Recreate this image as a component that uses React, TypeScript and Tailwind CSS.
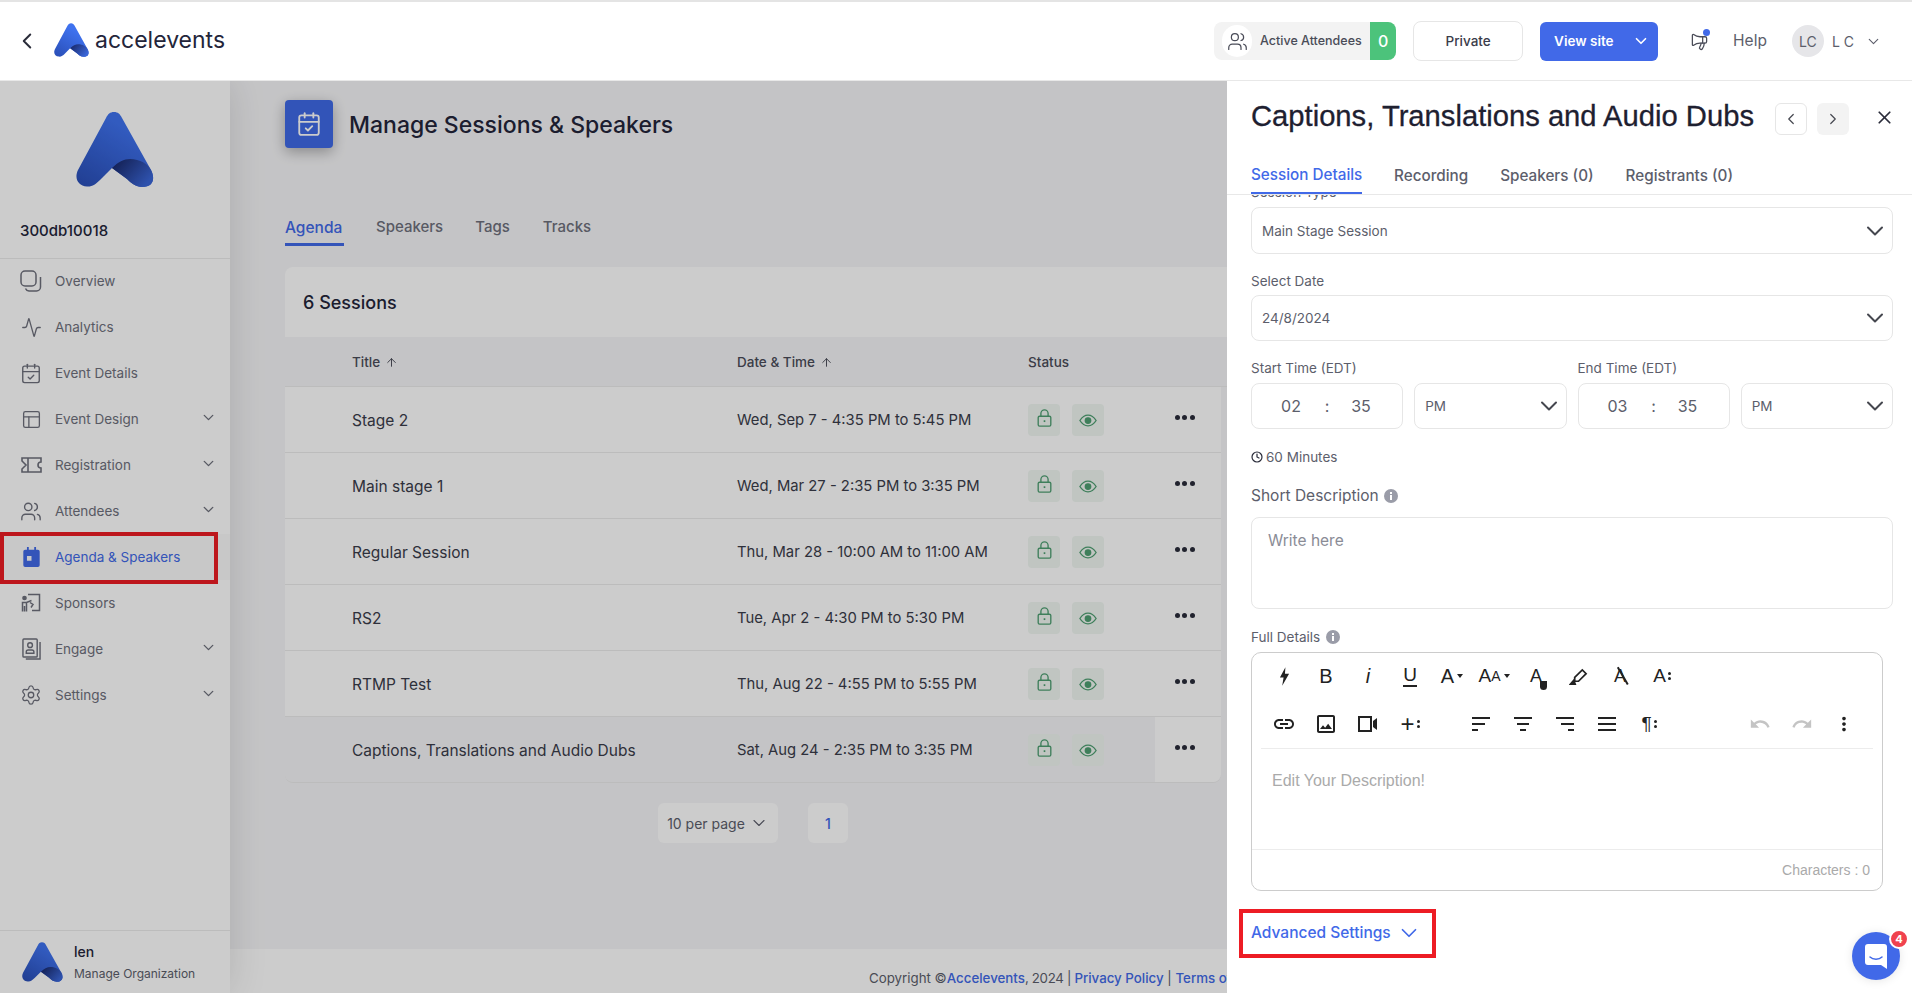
import React from 'react';
import { Activity, ArrowUp, CalendarCheck, ChevronDown, ChevronLeft, ChevronRight, Clock, Megaphone, PanelsTopLeft, Settings, Users, X } from 'lucide-react';
import { MdLink, MdMoreVert, MdOutlineImage, MdRedo, MdUndo } from 'react-icons/md';

const Logo = ({ id, className }: { id: string; className: string }) => (
  <svg viewBox="0 0 78 75" className={className}>
    <defs>
      <linearGradient id={`${id}a`} x1="0.1" y1="1" x2="0.6" y2="0.2">
        <stop offset="0" stopColor="#2a4fb8" />
        <stop offset="1" stopColor="#3f72ef" />
      </linearGradient>
      <linearGradient id={`${id}b`} x1="0" y1="0" x2="1" y2="0.6">
        <stop offset="0" stopColor="#16235f" />
        <stop offset="1" stopColor="#3a66d8" />
      </linearGradient>
    </defs>
    <path d="M38 0C42 0 44 2 46 6L75 58C79 66 78 75 66 75C60 75 55 71 51 67L36 56L24 68C20 72 16 75 11 74.5C2 74-2 66 2 58L30 6C32 2 34 0 38 0Z" fill={`url(#${id}a)`} />
    <path d="M36 56C42 50 48 47 54 47C64 47 72 52 75 58C79 66 78 75 66 75C60 75 55 71 51 67Z" fill={`url(#${id}b)`} />
  </svg>
);

const OverviewIcon = () => (
  <svg viewBox="0 0 22 22" className="h-[22px] w-[22px]" fill="none" stroke="currentColor" strokeWidth="1.5">
    <rect x="1" y="1" width="15" height="15" rx="4" />
    <path d="M20.5 7v10a4 4 0 0 1-4 4H9a4 4 0 0 1-3.5-2.5" />
  </svg>
);
const TicketIcon = () => (
  <svg viewBox="0 0 22 18" className="h-[18px] w-[22px]" fill="none" stroke="currentColor" strokeWidth="1.6">
    <path d="M2 2h19v4a3 3 0 0 0 0 6v4H2v-3l4-4-4-4zM8 2v14" />
  </svg>
);
const AgendaIcon = () => (
  <svg viewBox="0 0 18 22" className="h-[20px] w-[17px]" fill="#4169e8">
    <path fillRule="evenodd" d="M4 0h2v3h6V0h2v3h2a2 2 0 0 1 2 2v15a2 2 0 0 1-2 2H2a2 2 0 0 1-2-2V5a2 2 0 0 1 2-2h2zM4 10v5h5v-5z" />
  </svg>
);
const SponsorsIcon = () => (
  <svg viewBox="0 0 20 20" className="h-[20px] w-[20px]" fill="none" stroke="currentColor" strokeWidth="1.5">
    <path d="M7 1.5h11.5v16H11" />
    <circle cx="3.5" cy="5" r="1.6" fill="currentColor" />
    <path d="M1.5 18.5v-9h4l5-2M5.5 9.5v9M3.5 13v5.500M9 9.500l3 2-2 3" />
  </svg>
);
const EngageIcon = () => (
  <svg viewBox="0 0 20 23" className="h-[22px] w-[19px]" fill="none" stroke="currentColor" strokeWidth="1.5">
    <rect x="1" y="1" width="15" height="19" rx="1" />
    <circle cx="8.500" cy="7.500" r="2.500" />
    <path d="M4.500 16v-1.500a2 2 0 0 1 2-2h4a2 2 0 0 1 2 2V16zM19 4v18H4" />
  </svg>
);
const LockIcon = () => (
  <svg viewBox="0 0 16 20" className="h-[18px] w-[15px]" fill="none" stroke="#4f9f72" strokeWidth="1.5">
    <rect x="1" y="8" width="14" height="11" rx="1.5" />
    <path d="M4 8V5a4 4 0 0 1 8 0v3" />
    <path d="M8 12.5v2" strokeWidth="1.8" />
  </svg>
);
const EyeIcon = () => (
  <svg viewBox="0 0 20 14" className="h-[13px] w-[18px]" fill="none" stroke="#4f9f72" strokeWidth="1.5">
    <path d="M1 7c2.500-4 5.500-6 9-6s6.500 2 9 6c-2.500 4-5.500 6-9 6s-6.500-2-9-6z" />
    <circle cx="10" cy="7" r="3" fill="#4f9f72" />
  </svg>
);
const ChatIcon = () => (
  <svg viewBox="0 0 22 25" className="h-[25px] w-[22px]">
    <path d="M3 0h16a3 3 0 0 1 3 3v22l-6-4H3a3 3 0 0 1-3-3V3a3 3 0 0 1 3-3z" fill="#fff" />
    <path d="M5 13c3 3 9 3 12 0" fill="none" stroke="#4169e8" strokeWidth="1.5" strokeLinecap="round" />
  </svg>
);
const InfoDot = () => (
  <svg viewBox="0 0 14 14" className="h-[14px] w-[14px]">
    <circle cx="7" cy="7" r="7" fill="#9a9ca8" />
    <rect x="6" y="6" width="2" height="5" fill="#fff" />
    <rect x="6" y="3" width="2" height="2" fill="#fff" />
  </svg>
);
const Align = ({ lines }: { lines: [number, number][] }) => (
  <svg viewBox="0 0 20 16" className="h-[16px] w-[20px]" stroke="#222222" strokeWidth="2">
    {lines.map(([a, b], i) => (
      <line key={i} x1={a} x2={b} y1={2 + i * 6} y2={2 + i * 6} />
    ))}
  </svg>
);

const nav: { label: string; icon: React.ReactNode; chevron?: boolean }[] = [
  { label: 'Overview', icon: <OverviewIcon /> },
  { label: 'Analytics', icon: <Activity size={21} strokeWidth={1.5} /> },
  { label: 'Event Details', icon: <CalendarCheck size={23} strokeWidth={1.5} /> },
  { label: 'Event Design', icon: <PanelsTopLeft size={21} strokeWidth={1.5} />, chevron: true },
  { label: 'Registration', icon: <TicketIcon />, chevron: true },
  { label: 'Attendees', icon: <Users size={23} strokeWidth={1.5} />, chevron: true },
  { label: 'Agenda & Speakers', icon: <AgendaIcon /> },
  { label: 'Sponsors', icon: <SponsorsIcon /> },
  { label: 'Engage', icon: <EngageIcon />, chevron: true },
  { label: 'Settings', icon: <Settings size={24} strokeWidth={1.4} />, chevron: true },
];

const sessions = [
  ['Stage 2', 'Wed, Sep 7 - 4:35 PM to 5:45 PM'],
  ['Main stage 1', 'Wed, Mar 27 - 2:35 PM to 3:35 PM'],
  ['Regular Session', 'Thu, Mar 28 - 10:00 AM to 11:00 AM'],
  ['RS2', 'Tue, Apr 2 - 4:30 PM to 5:30 PM'],
  ['RTMP Test', 'Thu, Aug 22 - 4:55 PM to 5:55 PM'],
  ['Captions, Translations and Audio Dubs', 'Sat, Aug 24 - 2:35 PM to 3:35 PM'],
];

const Cell = ({ children }: { children: React.ReactNode }) => (
  <div className="flex h-[48px] w-[42px] items-center justify-center font-['Liberation_Sans',sans-serif] text-[#222222]">{children}</div>
);
const Dots = () => (
  <span className="ml-[2px] flex flex-col gap-[2px]">
    <i className="block h-[3px] w-[3px] rounded-full bg-[#222222]" />
    <i className="block h-[3px] w-[3px] rounded-full bg-[#222222]" />
  </span>
);
const Caret = () => <span className="ml-[3px] h-0 w-0 border-x-[3.5px] border-t-[4px] border-x-transparent border-t-[#222222]" />;

const Select = ({ text, className }: { text: string; className: string }) => (
  <div className={`flex items-center justify-between rounded-lg border border-[#e6e6e6] pl-[10px] pr-[3px] text-[13.500px] text-[#5c5e6b] ${className}`}>
    <span>{text}</span>
    <ChevronDown size={28} strokeWidth={1.7} className="text-[#45474f]" />
  </div>
);
const Time = ({ h }: { h: string }) => (
  <div className="flex h-[46px] items-center rounded-lg border border-[#e6e6e6] text-[16px] text-[#5c5e6b]">
    <span className="w-[78px] text-center">{h}</span>
    <span className="-ml-[6px] w-[6px] text-center">:</span>
    <span className="-ml-[4px] w-[70px] text-center">35</span>
  </div>
);

export default function App() {
  return (
    <div className="flex h-screen w-full flex-col overflow-hidden bg-white font-['Inter',sans-serif] text-[#2a2c3a]">
      <header className="relative z-10 flex h-[81px] shrink-0 items-center border-b border-t-2 border-[#e4e4e4] border-b-[#e8e8e8] bg-white">
        <ChevronLeft size={26} strokeWidth={1.8} className="ml-[14px] text-[#2a2c3a]" />
        <Logo id="h" className="ml-[14px] -mt-[3px] h-[34px] w-[35px]" />
        <span className="ml-[6px] -mt-[2px] text-[23px] leading-none text-[#23253a]">accelevents</span>
        <div className="ml-auto flex h-[38px] w-[182px] items-center overflow-hidden rounded-lg bg-[#f3f3f3]">
          <span className="ml-[8px] flex h-[32px] w-[30px] items-center justify-center rounded-full bg-white"><Users size={21} strokeWidth={1.4} className="text-[#4a4c58]" /></span>
          <span className="ml-[8px] whitespace-nowrap text-[12.5px] font-medium text-[#4a4c58]">Active Attendees</span>
          <span className="ml-auto flex h-full w-[26px] items-center justify-center bg-[#4cc37b] text-[16px] font-medium text-white">0</span>
        </div>
        <button className="ml-[17px] h-[40px] w-[110px] rounded-lg border border-[#e6e6e6] text-[13.500px] font-medium text-[#3a3c4a]">Private</button>
        <button className="ml-[17px] flex h-[39px] w-[118px] items-center rounded-md bg-[#4169e8] pl-[14px] text-[13.500px] font-semibold text-white">
          View site
          <ChevronDown size={18} strokeWidth={2.2} className="ml-[18px]" />
        </button>
        <span className="relative ml-[32px] text-[#4a4c58]">
          <Megaphone size={19} strokeWidth={1.6} className="-scale-x-100" />
          <i className="absolute -right-[1px] -top-[3px] h-[7px] w-[7px] rounded-full bg-[#4169e8]" />
        </span>
        <span className="ml-[24px] text-[15.500px] text-[#5c5e6b]">Help</span>
        <span className="ml-[25px] flex h-[32px] w-[32px] items-center justify-center rounded-full bg-[#e6e6e9] text-[14px] text-[#5c5e6b]">LC</span>
        <span className="ml-[8px] text-[14px] text-[#5c5e6b]">L C</span>
        <ChevronDown size={17} strokeWidth={1.6} className="ml-[11px] mr-[30px] text-[#5c5e6b]" />
      </header>

      <div className="relative flex min-h-0 flex-1">
        <aside className="relative z-[1] flex w-[230px] shrink-0 flex-col bg-white shadow-[0_0_36px_rgba(0,0,0,0.13)]">
          <div className="flex justify-center pt-[31px]"><Logo id="s" className="-ml-[1px] h-[75px] w-[78px]" /></div>
          <div className="border-b border-[#ececec] pb-[15px] pl-[20px] pt-[32px] text-[15px] font-medium leading-[24px] text-[#23253a]">300db10018</div>
          <nav className="-mt-px">
            {nav.map((n) => {
              const active = n.label === 'Agenda & Speakers';
              return (
                <div key={n.label} className={`relative flex h-[46px] items-center pl-[20px] ${active ? 'bg-[#fafafa] text-[#4169e8]' : 'text-[#6e707c]'}`}>
                  <span className="flex w-[35px] items-center"><span className="flex w-[22px] justify-center">{n.icon}</span></span>
                  <span className="whitespace-nowrap text-[13.500px]">{n.label}</span>
                  {n.chevron && <ChevronDown size={17} strokeWidth={1.9} className="absolute left-[200px] top-[13px]" />}
                  {active && <span className="absolute -bottom-[4px] -top-[2px] left-0 z-[5] w-[218px] border-4 border-[#ed1c24]" />}
                </div>
              );
            })}
          </nav>
          <div className="mt-auto flex h-[63px] items-center border-t border-[#ececec] pl-[22px]">
            <Logo id="o" className="h-[40px] w-[41px]" />
            <div className="ml-[11px]">
              <div className="text-[14px] font-medium leading-[20px] text-[#23253a]">len</div>
              <div className="mt-[3px] whitespace-nowrap text-[12px] leading-[18px] text-[#5c5e6b]">Manage Organization</div>
            </div>
          </div>
        </aside>

        <main className="flex min-w-0 flex-1 flex-col overflow-hidden bg-[#f6f6f8]">
          <div className="flex flex-col pl-[55px]">
            <div className="mt-[19px] flex items-center">
              <span className="flex h-[48px] w-[48px] items-center justify-center rounded bg-[#3f69e6] text-white shadow-[0_4px_14px_rgba(0,0,0,0.3)]"><CalendarCheck size={26} strokeWidth={1.7} /></span>
              <h1 className="ml-[16px] mt-[3px] text-[23px] font-medium text-[#23253a]">Manage Sessions &amp; Speakers</h1>
            </div>
            <div className="mt-[65px] flex h-[33px] pt-[3px] text-[15px] font-medium text-[#6e707c]">
              <span className="w-[59px] border-b-[3px] border-[#4169e8] text-[15.500px] text-[#4169e8]">Agenda</span>
              <span className="ml-[32px]">Speakers</span>
              <span className="ml-[32px]">Tags</span>
              <span className="ml-[33px]">Tracks</span>
            </div>
            <div className="mt-[21px] flex h-[70px] w-[960px] items-center rounded-t-lg bg-white pl-[18px] text-[18px] font-medium text-[#23253a]">6 Sessions</div>
            <div className="grid h-[50px] w-[960px] grid-cols-[452px_291px_127px_66px] items-center border-b border-[#ececec] pt-[2px] text-[13.500px] font-medium text-[#4a4c58]">
              <span className="flex items-center gap-[5px] pl-[67px]">Title <ArrowUp size={13} strokeWidth={1.8} /></span>
              <span className="flex items-center gap-[5px]">Date &amp; Time <ArrowUp size={13} strokeWidth={1.8} /></span>
              <span>Status</span>
            </div>
            <div className="w-[936px]">
              {sessions.map(([title, date], i) => {
                const hover = i === 5;
                return (
                  <div key={title} className={`grid h-[66px] grid-cols-[452px_291px_127px_66px] items-center border-b border-[#ececec] text-[15.500px] text-[#3a3c4a] ${hover ? 'rounded-b-lg bg-[#f6f6f8]' : 'bg-white'}`}>
                    <span className="whitespace-nowrap pl-[67px] pt-[2px]">{title}</span>
                    <span className="whitespace-nowrap pt-[2px] text-[14.800px]">{date}</span>
                    <span className="flex gap-[12px]">
                      <span className="flex h-[32px] w-[32px] items-start justify-center rounded bg-[#f0f7f2] pt-[5px]"><LockIcon /></span>
                      <span className="flex h-[32px] w-[32px] items-center justify-center rounded bg-[#f0f7f2] pt-[1px]"><EyeIcon /></span>
                    </span>
                    <span className={`flex h-full items-center justify-center rounded-br-lg pr-[7px] ${hover ? 'bg-white' : ''}`}>
                      <span className="-mt-[4px] flex gap-[2.5px]">
                        <i className="block h-[5px] w-[5px] rounded-full bg-[#2a2c3a]" />
                        <i className="block h-[5px] w-[5px] rounded-full bg-[#2a2c3a]" />
                        <i className="block h-[5px] w-[5px] rounded-full bg-[#2a2c3a]" />
                      </span>
                    </span>
                  </div>
                );
              })}
            </div>
            <div className="ml-[373px] mt-[20px] flex gap-[30px]">
              <span className="flex h-[40px] w-[120px] items-center justify-center gap-[4px] rounded-md bg-white text-[14px] text-[#5c5e6b]">10 per page <ChevronDown size={20} strokeWidth={1.3} /></span>
              <span className="flex h-[40px] w-[40px] items-center justify-center rounded-md bg-white text-[14px] font-medium text-[#4169e8]">1</span>
            </div>
          </div>
          <footer className="mt-auto h-[44px] shrink-0 whitespace-nowrap bg-white pl-[639px] pt-[18px] text-[13.300px] leading-[22px] text-[#5c5e6b]">
            Copyright ©<span className="font-medium text-[#4169e8]">Accelevents</span><span className="tracking-tight">, 2024 | </span><span className="font-medium text-[#4169e8]">Privacy Policy</span> | <span className="font-medium text-[#4169e8]">Terms of Service</span>
          </footer>
        </main>

        <div className="absolute inset-0 z-[2] bg-black/20" />

        <section className="absolute bottom-0 right-0 top-0 z-[3] flex w-[685px] flex-col bg-white">
          <div className="mt-[15px] flex h-[40px] items-center pl-[24px]">
            <h2 className="mt-[2px] w-[524px] whitespace-nowrap font-['Liberation_Sans',sans-serif] text-[29.200px] text-[#1e2030] [-webkit-text-stroke:0.3px_#1e2030]">Captions, Translations and Audio Dubs</h2>
            <span className="mt-[6px] flex h-[32px] w-[32px] items-center justify-center rounded-md border border-[#e6e6e6] text-[#45474f]"><ChevronLeft size={18} strokeWidth={1.6} /></span>
            <span className="ml-[10px] mt-[6px] flex h-[32px] w-[32px] items-center justify-center rounded-md bg-[#f3f3f3] text-[#45474f]"><ChevronRight size={18} strokeWidth={1.6} /></span>
            <X size={21} strokeWidth={2} className="ml-[25px] mt-[2px] text-[#2a2c3a]" />
          </div>
          <div className="mt-[19px] flex h-[40px] border-b border-[#e8e8e8] pl-[24px] text-[15.250px] font-medium text-[#5c5e6b]">
            <span className="flex h-[39px] w-[111px] items-center whitespace-nowrap border-b-2 border-[#4169e8] pt-[3px] text-[#4169e8]">Session Details</span>
            <span className="ml-[32px] flex h-[39px] items-center pt-[3px]">Recording</span>
            <span className="ml-[32px] flex h-[39px] items-center pt-[3px]">Speakers (0)</span>
            <span className="ml-[32px] flex h-[39px] items-center pt-[3px]">Registrants (0)</span>
          </div>
          <div className="min-h-0 flex-1 overflow-hidden pl-[24px] pr-[19px] text-[13.500px] leading-[20px] text-[#5c5e6b]">
            <div className="-mt-[13px]">Session Type</div>
            <Select text="Main Stage Session" className="mt-[5px] h-[47px]" />
            <div className="mt-[17px]">Select Date</div>
            <Select text="24/8/2024" className="mt-[4px] h-[46px]" />
            <div className="mt-[17px] grid grid-cols-4 gap-x-[11px]">
              <span className="col-span-2">Start Time (EDT)</span>
              <span className="col-span-2">End Time (EDT)</span>
              <div className="mt-[5px]"><Time h="02" /></div>
              <Select text="PM" className="mt-[5px] h-[46px]" />
              <div className="mt-[5px]"><Time h="03" /></div>
              <Select text="PM" className="mt-[5px] h-[46px]" />
            </div>
            <div className="mt-[18px] flex items-center gap-[3px]"><Clock size={12} strokeWidth={2.4} className="text-[#2a2c3a]" />60 Minutes</div>
            <div className="mt-[19px] flex items-center gap-[5px] text-[15.500px]">Short Description <InfoDot /></div>
            <div className="mt-[11px] h-[92px] rounded-lg border border-[#e6e6e6] pl-[16px] pt-[13px] text-[15.500px] text-[#8a8c96]">Write here</div>
            <div className="mt-[18px] flex items-center gap-[6px]">Full Details <InfoDot /></div>
            <div className="mt-[5px] flex h-[239px] w-[632px] flex-col rounded-[10px] border border-[#cccccc]">
              <div className="-mt-px flex pl-[11px]">
                <Cell><svg viewBox="0 0 12 20" className="h-[19px] w-[11px]" fill="#222222"><path d="M7 0 1 11h4l-1.500 9L11 7H6.500z" /></svg></Cell>
                <Cell><span className="text-[20px]">B</span></Cell>
                <Cell><span className="text-[20px] italic">i</span></Cell>
                <Cell><span className="border-b-2 border-[#222222] text-[19px] leading-[20px]">U</span></Cell>
                <Cell><span className="text-[20px]">A</span><Caret /></Cell>
                <Cell><span className="text-[19px]">A</span><span className="text-[14px]">A</span><Caret /></Cell>
                <Cell><span className="relative text-[18px] leading-none">A<i className="absolute -right-[5px] bottom-[-5px] h-[9px] w-[7px] rounded-b-full rounded-t-[40%] bg-[#222222]" /></span></Cell>
                <Cell><svg viewBox="0 0 20 20" className="h-[19px] w-[19px]" fill="none" stroke="#222222" strokeWidth="1.8"><path d="M6 11 14 3l4 4-8 8-4 0z" /><path d="M5 14 1.500 18h5z" fill="#222222" /></svg></Cell>
                <Cell><span className="relative text-[18px] leading-none font-light">A<i className="absolute -left-[1px] top-[8px] block h-[1.500px] w-[20px] rotate-[60deg] bg-[#222222]" /></span></Cell>
                <Cell><span className="text-[19px]">A</span><Dots /></Cell>
              </div>
              <div className="flex h-[49px] pl-[11px] text-[#222222]">
                <Cell><MdLink size={24} /></Cell>
                <Cell><MdOutlineImage size={24} /></Cell>
                <Cell><svg viewBox="0 0 20 16" className="h-[16px] w-[20px]" fill="none" stroke="#222222" strokeWidth="2"><rect x="1" y="1" width="12" height="14" /><path d="M15 5l4-3v12l-4-3z" fill="#222222" stroke="none" /></svg></Cell>
                <Cell><span className="text-[24px] leading-none">+</span><Dots /></Cell>
                <span className="ml-[29px] flex">
                  <Cell><Align lines={[[1, 19], [1, 14], [1, 7]]} /></Cell>
                  <Cell><Align lines={[[1, 19], [4, 16], [7, 13]]} /></Cell>
                  <Cell><Align lines={[[1, 19], [6, 19], [13, 19]]} /></Cell>
                  <Cell><Align lines={[[1, 19], [1, 19], [1, 19]]} /></Cell>
                  <Cell><span className="text-[19px]">¶</span><Dots /></Cell>
                </span>
                <span className="ml-[69px] flex">
                  <Cell><MdUndo size={22} className="text-[#c4c4c4]" /></Cell>
                  <Cell><MdRedo size={22} className="text-[#c4c4c4]" /></Cell>
                  <Cell><MdMoreVert size={22} /></Cell>
                </span>
              </div>
              <div className="mx-[9px] -mt-px h-px bg-[#ececec]" />
              <div className="h-[100px] pl-[20px] pt-[22px] font-['Liberation_Sans',sans-serif] text-[16px] text-[#aaaaaa]">Edit Your Description!</div>
              <div className="flex flex-1 items-center justify-end border-t border-[#ececec] pr-[12px] font-['Liberation_Sans',sans-serif] text-[14px] text-[#aaaaaa]">Characters : 0</div>
            </div>
            <div className="-ml-[12px] mt-[18px] flex h-[49px] w-[197px] items-center gap-[5px] border-4 border-[#ed1c24] pb-[2px] pl-[8px] text-[15.500px] font-medium text-[#4169e8]">
              Advanced Settings <ChevronDown size={26} strokeWidth={1.6} />
            </div>
          </div>
          <div className="absolute bottom-[13px] right-[12px] flex h-[48px] w-[48px] items-center justify-center rounded-full bg-[#4169e8] shadow-[0_1px_10px_rgba(0,0,0,0.1)]">
            <ChatIcon />
            <span className="absolute -right-[9px] -top-[3px] flex h-[20px] w-[20px] items-center justify-center rounded-full border-2 border-white bg-[#f0424e] text-[11px] font-bold text-white">4</span>
          </div>
        </section>
      </div>
    </div>
  );
}
